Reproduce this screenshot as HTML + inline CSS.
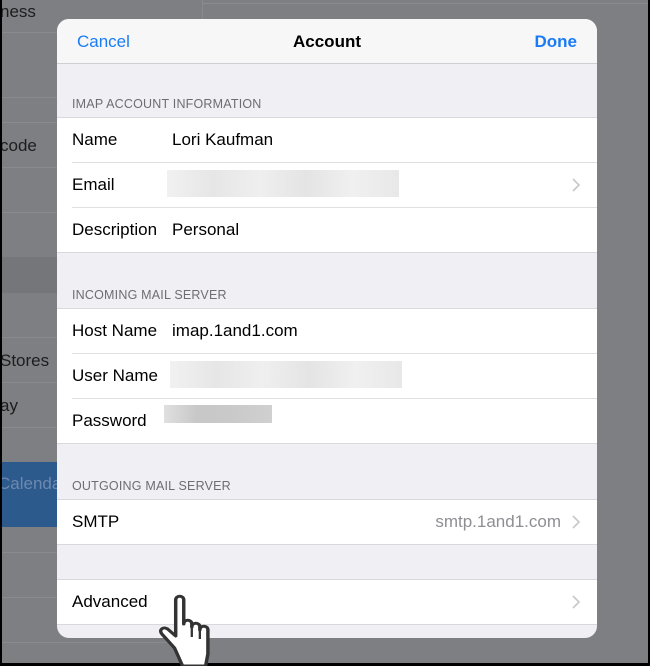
<!DOCTYPE html>
<html><head><style>
body{margin:0;width:650px;height:665px;overflow:hidden;background:#000;font-family:"Liberation Sans",sans-serif;}
#bg{position:absolute;left:2px;top:0;width:646px;height:663px;background:#7e7f83;overflow:hidden}
.l{position:absolute;left:0;width:200px;height:1px;background:#898a8e}
.bt{position:absolute;left:0;font-size:17px;color:#1d1d1f}
#m{position:absolute;left:57px;top:19px;width:540px;height:619px;background:#efeff4;border-radius:12px;overflow:hidden}
.hd{height:44px;background:#f7f7f8;border-bottom:1px solid #cfcfd3;position:relative;font-size:17px}
.sec{position:absolute;left:15px;font-size:12.5px;color:#6d6d72;letter-spacing:.2px}
.grp{position:absolute;left:0;width:540px;background:#fff;border-top:1px solid #d9d9dd;border-bottom:1px solid #d9d9dd}
.row{height:44px;position:relative;font-size:17px;color:#000}
.row+.row{border-top:1px solid #e0e0e3;margin-left:15px}
.row span{position:absolute;top:12px}
.chev{position:absolute;right:16px;top:15px}
.blur{position:absolute;top:7px;height:27px;background:linear-gradient(90deg,#f1f1f1,#e6e6e6 20%,#efefef 40%,#e4e4e4 60%,#f0f0f0 80%,#e8e8e8)}
</style></head><body>
<div id="bg">
<div class="l" style="top:32px"></div><div class="l" style="top:97px"></div><div class="l" style="top:122px"></div><div class="l" style="top:167px"></div>
<div style="position:absolute;left:0;top:257px;width:200px;height:36px;background:#75767a"></div>
<div class="l" style="top:212px"></div><div class="l" style="top:337px"></div><div class="l" style="top:382px"></div><div class="l" style="top:427px"></div>
<div style="position:absolute;left:0;top:462px;width:200px;height:65px;background:#2d5a8c"></div>
<div class="l" style="top:552px"></div><div class="l" style="top:597px"></div><div class="l" style="top:642px"></div>
<div style="position:absolute;left:200px;top:0;width:1px;height:60px;background:#898a8e"></div>
<div style="position:absolute;left:200px;top:3px;width:446px;height:1px;background:#8a8b8f"></div>
<span class="bt" style="left:-2px;top:2px">ness</span>
<span class="bt" style="left:-2px;top:136px">code</span>
<span class="bt" style="left:-2px;top:351px">Stores</span>
<span class="bt" style="left:-2px;top:396px">ay</span>
<span class="bt" style="left:-4px;top:474px;color:#6d89b0">Calendar</span>
</div>
<div id="m">
<div class="hd"><span style="position:absolute;left:20px;top:13px;color:#1a7cf5">Cancel</span><span style="position:absolute;left:0;right:0;text-align:center;top:13px;font-weight:bold;color:#000">Account</span><span style="position:absolute;right:20px;top:13px;color:#1a7cf5;font-weight:bold">Done</span></div>
<div class="sec" style="top:78px">IMAP ACCOUNT INFORMATION</div>
<div class="grp" style="top:98px">
<div class="row" style="padding-left:15px"><span style="left:15px">Name</span><span style="left:115px">Lori Kaufman</span></div>
<div class="row"><span style="left:0">Email</span><div class="blur" style="left:95px;width:232px"></div><svg class="chev" width="9" height="14"><path d="M1 1l6 6-6 6" stroke="#c7c7cc" stroke-width="1.6" fill="none"/></svg></div>
<div class="row"><span style="left:0">Description</span><span style="left:100px">Personal</span></div>
</div>
<div class="sec" style="top:269px">INCOMING MAIL SERVER</div>
<div class="grp" style="top:289px">
<div class="row"><span style="left:15px">Host Name</span><span style="left:115px">imap.1and1.com</span></div>
<div class="row"><span style="left:0">User Name</span><div class="blur" style="left:98px;width:232px"></div></div>
<div class="row"><span style="left:0">Password</span><div class="blur" style="left:92px;width:108px;top:6px;height:18px;background:linear-gradient(90deg,#e0e0e0,#c8c8c8 30%,#c9c9c9 60%,#d0d0d0)"></div></div>
</div>
<div class="sec" style="top:460px">OUTGOING MAIL SERVER</div>
<div class="grp" style="top:480px">
<div class="row"><span style="left:15px">SMTP</span><span style="right:36px;color:#8e8e93">smtp.1and1.com</span><svg class="chev" width="9" height="14"><path d="M1 1l6 6-6 6" stroke="#c7c7cc" stroke-width="1.6" fill="none"/></svg></div>
</div>
<div class="grp" style="top:560px">
<div class="row"><span style="left:15px">Advanced</span><svg class="chev" width="9" height="14"><path d="M1 1l6 6-6 6" stroke="#c7c7cc" stroke-width="1.6" fill="none"/></svg></div>
</div>
</div>
<svg style="position:absolute;left:150px;top:594px" width="66" height="72" viewBox="0 0 56 72"><g transform="scale(1.15,1)"><path d="M17 54 L6 40 C3 36 7 32 11 35 L18 42 L18 6 C18 1 25 1 25 6 L25 30 C25 25 32 25 32 30 L32 33 C32 28 39 28 39 33 L39 36 C39 31 46 31 46 36 L46 60 L44 72 L24 72 Z" fill="#fff" stroke="#333" stroke-width="3" stroke-linejoin="round"/><path d="M32 33v10M39 36v9" stroke="#333" stroke-width="2"/></g></svg>
</body></html>
